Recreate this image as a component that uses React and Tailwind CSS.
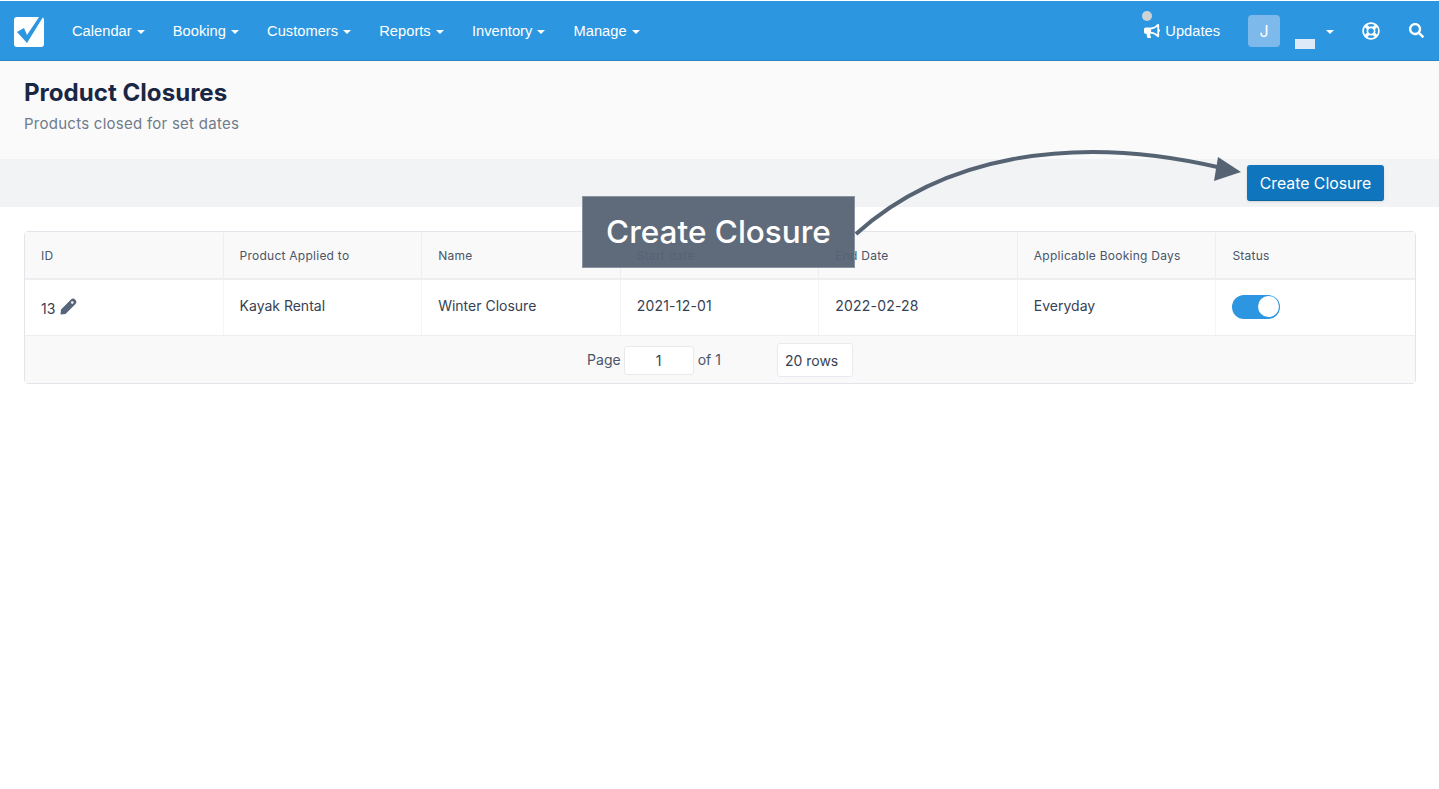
import { FaBullhorn, FaRegLifeRing, FaSearch } from "react-icons/fa";

const navItems = ["Calendar", "Booking", "Customers", "Reports", "Inventory", "Manage"];
const columns = ["ID", "Product Applied to", "Name", "Start date", "End Date", "Applicable Booking Days", "Status"];

const Caret = () => (
  <span className="ml-[5px] mt-[2px] inline-block h-0 w-0 border-x-[4.5px] border-t-[4.5px] border-x-transparent border-t-white" />
);

const App = () => {
  return (
    <div className="relative min-h-[789px] bg-white font-['Inter',sans-serif] text-[#364254] pt-px overflow-hidden">
      <nav className="flex h-[60px] items-center bg-[#2d96e0] border-b border-[#2b82c2] pl-[14px] pr-[15px] font-['Liberation_Sans',sans-serif] text-white">
        <svg width="30" height="32" viewBox="0 0 30 32" className="mr-[28px] mt-[1px]">
          <rect x="0" y="2" width="30" height="30" rx="3" fill="#fff" />
          <path d="M3 17 L10 13 L13 20 L25 2 L29 2 L13 28 Z" fill="#2d96e0" />
        </svg>
        <div className="flex items-center gap-[28.2px] pt-[2px] text-[14.7px]">
          {navItems.map((item) => (
            <a key={item} className="flex items-center">
              {item}
              <Caret />
            </a>
          ))}
        </div>
        <div className="ml-auto flex items-center">
          <div className="relative flex items-center gap-[5px] pt-[2px] text-[14.7px]">
            <span className="absolute left-[-2px] top-[-7px] h-[10px] w-[10px] rounded-full bg-[#cfd3d8]" />
            <FaBullhorn className="h-[16px] w-[16px]" />
            Updates
          </div>
          <div className="ml-[28px] flex h-[32px] w-[32px] items-center justify-center rounded bg-[#7db9ea] text-[16px] font-['Inter',sans-serif]">
            J
          </div>
          <span className="ml-[15px] mt-[26px] h-[10px] w-[20px] bg-[#dfeaf8]" />
          <span className="ml-[6px] flex">
            <Caret />
          </span>
          <FaRegLifeRing className="ml-[28px] h-[18px] w-[18px]" />
          <FaSearch className="ml-[29px] h-[15px] w-[15px]" />
        </div>
      </nav>

      <header className="h-[98px] bg-[#fafafa] px-[24px] pt-[17px]">
        <h1 className="text-[24.1px] leading-[30px] font-bold text-[#1a2744]">Product Closures</h1>
        <p className="mt-[5px] text-[15px] leading-[22px] tracking-[0.26px] text-[#707b8b]">
          Products closed for set dates
        </p>
      </header>

      <div className="flex h-[48px] items-center justify-end bg-[#f1f3f5] pr-[55px]">
        <button className="h-[36px] w-[137px] rounded-[3px] border-b border-[#0d659f] bg-[#0f75bd] pt-[2px] text-[15.8px] font-normal text-white shadow">
          Create Closure
        </button>
      </div>

      <div className="pl-[24px] pr-[23px] pt-[24px]">
        <div className="rounded border border-[#e2e5e9] text-[14px]">
          <div className="grid h-[48px] grid-cols-7 border-b-2 border-[#eceef0] bg-[#f9f9f9] pt-[1px] text-[12px] tracking-[0.25px] text-[#4a5568]">
            {columns.map((col, i) => (
              <div key={col} className={`flex items-center px-[16px] ${i < 6 ? "border-r border-[#eceef0]" : ""}`}>
                {col}
              </div>
            ))}
          </div>
          <div className="grid h-[55px] grid-cols-7 bg-white">
            <div className="flex items-center gap-[4px] border-r border-[#f5f5f6] px-[16px] pb-[2px]">
              <span className="mt-[4px]">13</span>
              <svg width="17" height="17" viewBox="0 0 17 17" className="ml-[1px] mt-[-1px]">
                <path
                  fillRule="evenodd"
                  d="M0.5 16.5 L1 11.5 L11 1.5 C12.2 0.3 13.8 0.3 15 1.5 L15.5 2 C16.7 3.2 16.7 4.8 15.5 6 L5.5 16 Z M12.3 3.2 A1.3 1.3 0 1 0 12.3 5.8 A1.3 1.3 0 1 0 12.3 3.2 Z"
                  fill="#56657a"
                />
              </svg>
            </div>
            <div className="flex items-center border-r border-[#f5f5f6] px-[16px] pb-[5px]">Kayak Rental</div>
            <div className="flex items-center border-r border-[#f5f5f6] px-[16px] pb-[5px]">Winter Closure</div>
            <div className="flex items-center border-r border-[#f5f5f6] px-[16px] pb-[5px] tracking-[0.2px]">2021-12-01</div>
            <div className="flex items-center border-r border-[#f5f5f6] px-[16px] pb-[5px] tracking-[0.2px]">2022-02-28</div>
            <div className="flex items-center border-r border-[#f5f5f6] px-[16px] pb-[5px]">Everyday</div>
            <div className="flex items-center px-[16px] pb-[2px]">
              <span className="flex h-[24px] w-[48px] items-center justify-end rounded-full bg-[#2d96e0] pr-[1px]">
                <span className="h-[21px] w-[21px] rounded-full bg-white" />
              </span>
            </div>
          </div>
          <div className="flex h-[48px] items-center justify-center border-t border-[#eceef0] bg-[#f9f9f9]">
            <span className="text-[#4a5568]">Page</span>
            <input
              readOnly
              value="1"
              className="ml-[3px] mr-[4px] mt-[1px] h-[29px] w-[70px] rounded-[3px] border border-[#e8eaed] bg-white text-center"
            />
            <span className="text-[#4a5568]">of 1</span>
            <span className="ml-[56px] flex h-[34px] w-[76px] items-center rounded-[3px] border border-[#e8eaed] bg-white pl-[7px] pt-[1px]">
              20 rows
            </span>
          </div>
        </div>
      </div>

      {/* annotation over the page */}
      <div className="absolute left-[582px] top-[196px] flex h-[72px] w-[273px] items-center justify-center border border-[#8a94a1] bg-[#566373]/95 text-[31.5px] font-medium text-white">
        Create Closure
      </div>
      <svg className="absolute left-[850px] top-[140px]" width="400" height="100" viewBox="0 0 400 100">
        <path d="M6 94 C 90 18, 220 -8, 372 28" fill="none" stroke="#566373" strokeWidth="4" />
        <path d="M391 32 L368 17 L364 41 Z" fill="#566373" />
      </svg>
    </div>
  );
};

export default App;
